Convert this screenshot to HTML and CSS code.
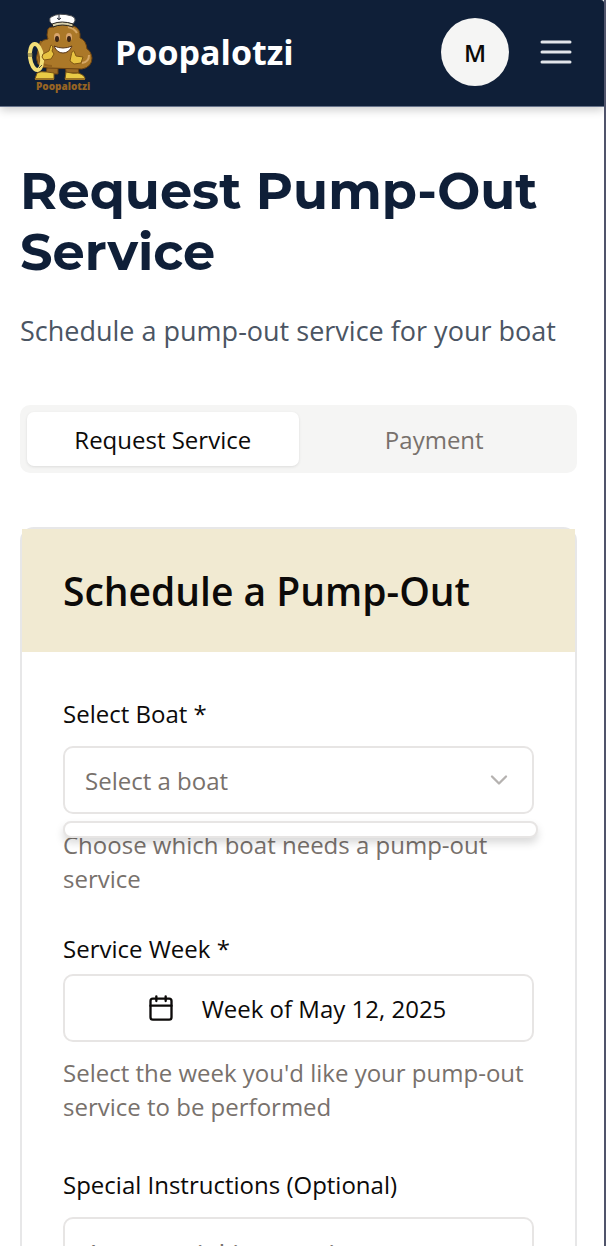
FILE: index.html
```html
<!DOCTYPE html>
<html lang="en">
<head>
<meta charset="utf-8">
<meta name="viewport" content="width=device-width, initial-scale=1">
<title>Request Pump-Out Service</title>
<link rel="stylesheet" href="styles.css">
</head>
<body>
<div class="app">
  <header class="topbar">
    <a class="brand" href="#">
      <svg class="brand-logo" viewBox="0 0 80 90" aria-hidden="true">
        <g stroke="#6b4212" stroke-width="1">
          <path d="M28 54h10v13H26zM45 54h12l2 12H46z" fill="#9a6a24"/>
          <path d="M28 22Q26 29 28 32Q18 33 18 44Q15 51 18 57Q21 61 28 61L62 62Q72 60 72 51Q71 44 67 42Q66 33 60 31Q61 22 54 19Q43 14 33 20Q29 20 28 22Z" fill="#ab7828"/>
        </g>
        <path d="M48 20Q54 21 57 26M62 56Q69 55 69 48" fill="none" stroke="#d6a765" stroke-width="2"/>
        <path d="M21 34Q17 45 20 55Q25 59 32 59" fill="none" stroke="#92621d" stroke-width="2"/>
        <path d="M30 15Q29 11 31 10Q39 5 52 9Q56 11 55 14L53 17Q43 14 33 18Z" fill="#fff" stroke="#4a4c50" stroke-width="1"/>
        <path d="M32 17Q42 13 53 17V20Q42 16 33 20Z" fill="#d8cfaa" stroke="#23201b" stroke-width="1"/>
        <path d="M39 8v5M37 11q2 3 4 0" fill="none" stroke="#252b38" stroke-width="1"/>
        <ellipse cx="37" cy="30" rx="3" ry="4" fill="#d9a56c"/><ellipse cx="49" cy="30" rx="3" ry="4" fill="#d9a56c"/>
        <ellipse cx="37" cy="32" rx="2" ry="3" fill="#3a2416"/><ellipse cx="49" cy="32" rx="2" ry="3" fill="#3a2416"/>
        <path d="M34 39Q43 43 52 39Q49 46 43 46Q37 46 34 39Z" fill="#fff" stroke="#593617" stroke-width="1"/>
        <ellipse cx="16" cy="50" rx="6" ry="13" transform="rotate(-7 16 50)" fill="none" stroke="#f3df78" stroke-width="4"/>
        <path d="M8 47h5M8 49h5M19 61l3-3" stroke="#5f5836" stroke-width="1"/>
        <path d="M23 47L29 44L31 38Q34 39 32 44L34 47L31 52L24 53L22 50Z" fill="#e8c341" stroke="#805713" stroke-width="1"/>
        <path d="M51 49Q52 43 54 44L56 49L63 50L61 56L54 57L50 54Z" fill="#e8c341" stroke="#805713" stroke-width="1"/>
        <path d="M17 66Q20 64 27 65L34 66V72H15ZM46 65Q54 67 58 66Q65 68 65 72H45Z" fill="#e9cb46" stroke="#795516" stroke-width="1"/>
        <path d="M15 72h19M45 72h20" stroke="#9c7425" stroke-width="2"/>
        <text class="logo-word" x="16" y="83">Poopalotzi</text>
      </svg>
      <span class="brand-name">Poopalotzi</span>
    </a>
    <div class="actions">
      <button class="avatar" type="button" aria-label="Account">M</button>
      <button class="menu" type="button" aria-label="Open menu">
        <svg class="icon-menu" viewBox="0 0 42 42"><path d="M7 11h28M7 21h28M7 31h28"/></svg>
      </button>
    </div>
  </header>

  <main class="content">
    <h1 class="title">Request Pump-Out Service</h1>
    <p class="subtitle">Schedule a pump-out service for your boat</p>

    <div class="tabs" role="tablist">
      <button class="tab tab-active" type="button" role="tab" aria-selected="true">Request Service</button>
      <button class="tab" type="button" role="tab" aria-selected="false">Payment</button>
    </div>

    <section class="card">
      <h2 class="card-title">Schedule a Pump-Out</h2>
      <form class="form">
        <div class="field">
          <label class="label label-spaced" for="boat">Select Boat *</label>
          <div class="select-wrap">
            <select class="control select" id="boat"><option>Select a boat</option></select>
            <svg class="icon-chevron" viewBox="0 0 24 24"><path d="m6 9 6 6 6-6"/></svg>
            <div class="popover"></div>
          </div>
          <p class="hint">Choose which boat needs a pump-out service</p>
        </div>
        <div class="field">
          <label class="label" for="week">Service Week *</label>
          <button class="control week" id="week" type="button">
            <svg class="icon-calendar" viewBox="0 0 24 24"><path d="M8 2v4M16 2v4M3 10h18"/><rect x="3" y="4" width="18" height="18" rx="2"/></svg>
            <span>Week of May 12, 2025</span>
          </button>
          <p class="hint">Select the week you'd like your pump-out service to be performed</p>
        </div>
        <div class="field">
          <label class="label label-spaced" for="notes">Special Instructions (Optional)</label>
          <textarea class="control notes" id="notes" placeholder="Any special instructions or notes"></textarea>
        </div>
      </form>
    </section>
  </main>
</div>
</body>
</html>
```
FILE: styles.css
```css
* { box-sizing: border-box; }

body {
  margin: 0;
  background: #fff;
  color: #0c0a09;
  font-family: "Open Sans", "Noto Sans", sans-serif;
  font-size: 24px;
}

button, select, textarea { font: inherit; color: inherit; }
h1, h2, p { margin: 0; }

.app {
  height: 100vh;
  overflow: hidden;
  border-right: 2px solid #50546b;
}

.topbar {
  display: flex;
  align-items: center;
  justify-content: space-between;
  height: 107px;
  padding: 0 27px 2px 20px;
  background: #0f1f38;
  border-bottom: 1px solid #66728a;
  border-top-right-radius: 3px;
  box-shadow: 0 3px 10px rgba(0, 0, 0, 0.2);
}

.brand {
  display: flex;
  align-items: center;
  gap: 15px;
  color: #fff;
  text-decoration: none;
}
.brand-logo { width: 80px; height: 90px; }
.logo-word {
  font: 800 10px "Open Sans", sans-serif;
  fill: #966423;
}
.brand-name { font-size: 34px; font-weight: 700; }

.actions { display: flex; align-items: center; gap: 26px; }
.avatar {
  width: 68px;
  height: 68px;
  padding: 0;
  border: 0;
  border-radius: 50%;
  background: #f5f5f4;
  font-weight: 600;
}
.menu { display: flex; padding: 0; border: 0; background: none; }
.icon-menu {
  width: 42px;
  height: 42px;
  fill: none;
  stroke: #e2e5ea;
  stroke-width: 3;
  stroke-linecap: round;
}

.content { padding: 54px 27px 0 20px; }
.title {
  color: #0f1f38;
  font-family: Montserrat, Inter, sans-serif;
  font-size: 51px;
  font-weight: 700;
  line-height: 61px;
}
.subtitle {
  margin-top: 28px;
  color: #4b5563;
  font-size: 27px;
  line-height: 40px;
}

.tabs {
  display: grid;
  grid-template-columns: 1fr 1fr;
  margin-top: 54px;
  padding: 7px;
  border-radius: 10px;
  background: #f5f5f4;
}
.tab {
  height: 54px;
  padding: 0;
  border: 0;
  border-radius: 7px;
  background: none;
  color: #78716c;
  font-weight: 500;
}
.tab-active {
  background: #fff;
  color: #0c0a09;
  box-shadow: 0 1px 3px rgba(0, 0, 0, 0.1);
}

.card {
  margin-top: 54px;
  border: 2px solid #e7e7e8;
  border-radius: 14px;
}
.card-title {
  padding: 41px;
  background: #f1ead2;
  font-size: 39px;
  font-weight: 600;
  line-height: 41px;
}
.form {
  display: flex;
  flex-direction: column;
  gap: 41px;
  padding: 42px 41px;
}
.label {
  display: block;
  margin-bottom: 13px;
  font-weight: 500;
  line-height: 24px;
}
.label-spaced { margin-bottom: 12px; line-height: 40px; }

.control {
  display: block;
  width: 100%;
  height: 68px;
  border: 2px solid #e7e5e4;
  border-radius: 10px;
  background: #fff;
}
.select-wrap { position: relative; }
.select {
  appearance: none;
  padding: 0 20px;
  color: #78716c;
}
.icon-chevron {
  position: absolute;
  top: 20px;
  right: 21px;
  width: 28px;
  height: 28px;
  fill: none;
  stroke: #b5b2b0;
  stroke-width: 2;
  stroke-linecap: round;
  stroke-linejoin: round;
  pointer-events: none;
}
.popover {
  position: absolute;
  top: 75px;
  left: 0;
  right: -4px;
  height: 17px;
  border: 2px solid #e7e5e4;
  border-radius: 8px;
  background: #fff;
  box-shadow: 0 5px 8px rgba(0, 0, 0, 0.15);
}
.hint {
  margin-top: 14px;
  color: #78716c;
  line-height: 34px;
}
.week {
  display: flex;
  align-items: center;
  justify-content: center;
  gap: 27px;
  padding: 0 24px 0 20px;
}
.icon-calendar {
  width: 28px;
  height: 28px;
  fill: none;
  stroke: #0c0a09;
  stroke-width: 2;
  stroke-linecap: round;
  stroke-linejoin: round;
}
.notes {
  height: 136px;
  padding: 16px 20px;
  font-size: 27px;
  line-height: 40px;
  resize: none;
}
.notes::placeholder { color: #78716c; }
```
